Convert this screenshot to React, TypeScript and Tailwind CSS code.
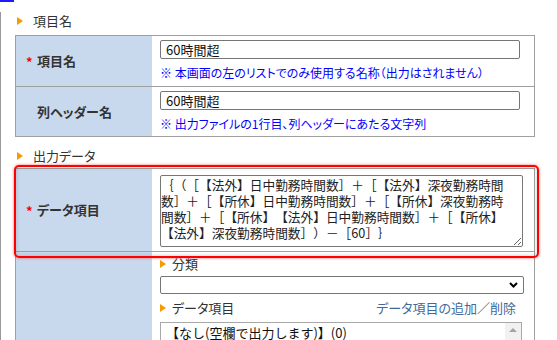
import React from 'react'

const DATA_LINES = [
  '｛（［【法外】日中勤務時間数］＋［【法外】深夜勤務時間',
  '数］＋［【所休】日中勤務時間数］＋［【所休】深夜勤務時',
  '間数］＋［【所休】【法外】日中勤務時間数］＋［【所休】',
  '【法外】深夜勤務時間数］）－［60］｝',
]

function Tri({ gap }: { gap: string }) {
  return (
    <span
      className={`inline-block w-0 h-0 border-y-[4.5px] border-y-transparent border-l-[6px] border-l-[#f59a00] ${gap}`}
    />
  )
}

function Label({ text, required }: { text: string; required?: boolean }) {
  return (
    <div className="w-[136px] flex-shrink-0 bg-[#c9d9ed] flex items-center pl-[10px]">
      <span className="w-[11px] text-[13px] leading-none font-bold text-[#ff0000]">{required ? '*' : ''}</span>
      <span className="text-[13px] font-bold text-[#333]">{text}</span>
    </div>
  )
}

function TextRow({ value, note, first }: { value: string; note: string; first?: boolean }) {
  return (
    <div className={`flex h-[50px] ${first ? '' : 'border-t border-[#a0a0a0]'}`}>
      <Label text={first ? '項目名' : '列ヘッダー名'} required={first} />
      <div className="flex-1 pl-[8px] pt-[4px]">
        <div className="w-[360px] h-[19px] border border-[#767676] rounded-[2px] px-[5px] text-[13px] leading-[17px] text-[#111]">
          {value}
        </div>
        <div className="mt-[6px] text-[12px] leading-[16px] text-[#0000ff] whitespace-nowrap">{note}</div>
      </div>
    </div>
  )
}

export default function App() {
  return (
    <div className="relative w-[557px] h-[340px] overflow-hidden bg-white font-['Noto_Sans_CJK_JP','Noto_Sans',sans-serif] [font-feature-settings:'palt']">
      <div className="w-[14px] h-[2px] bg-[#1b1bff]" />

      <div className="mt-[10px] border-l border-[#9a9a9a] pl-[14px] h-[330px]">
        {/* 項目名 */}
        <div className="h-[17px] flex items-center pl-[2px] mb-[6px]">
          <Tri gap="mr-[10px]" />
          <span className="text-[13px] text-[#333]">項目名</span>
        </div>
        <div className="w-[520px] border border-[#a0a0a0]">
          <TextRow first value="60時間超" note="※ 本画面の左のリストでのみ使用する名称（出力はされません）" />
          <TextRow value="60時間超" note="※ 出力ファイルの1行目、列ヘッダーにあたる文字列" />
        </div>

        {/* 出力データ */}
        <div className="h-[17px] flex items-center pl-[2px] mt-[10px] mb-[4px]">
          <Tri gap="mr-[10px]" />
          <span className="text-[13px] text-[#333]">出力データ</span>
        </div>
        <div className="w-[520px] border-x border-t border-[#a0a0a0]">
          <div className="flex h-[82px]">
            <Label text="データ項目" required />
            <div className="flex-1 pl-[8px] pt-[6px]">
              <textarea
                readOnly
                wrap="off"
                value={DATA_LINES.join('\n')}
                className="block w-[363px] h-[72px] border border-[#777] rounded-[2px] pt-[1px] pl-0 pr-[4px] text-[12.7px] leading-[16px] text-[#222] overflow-hidden resize [font-feature-settings:normal] [text-spacing-trim:space-all] outline-none"
              />
            </div>
          </div>
          <div className="flex h-[120px] border-t border-[#a0a0a0]">
            <div className="w-[136px] flex-shrink-0 bg-[#c9d9ed]" />
            <div className="flex-1 pl-[8px] pt-[4px] pr-[11px]">
              <div className="h-[16px] flex items-center">
                <Tri gap="mr-[6px]" />
                <span className="text-[13px] text-[#333]">分類</span>
              </div>
              <div className="mt-[4px] w-[364px] h-[18px] border border-[#767676] rounded-[2px] flex items-center justify-end pr-[5px]">
                <svg width="9" height="6" viewBox="0 0 9 6">
                  <path d="M1 1l3.5 3.5L8 1" fill="none" stroke="#000" strokeWidth="2" />
                </svg>
              </div>
              <div className="mt-[6px] h-[16px] flex items-center w-[362px]">
                <Tri gap="mr-[6px]" />
                <span className="text-[13px] text-[#333]">データ項目</span>
                <span className="ml-auto pr-[6px] text-[13px] text-[#3f6a9a]">データ項目の追加／削除</span>
              </div>
              <div className="mt-[6px] w-[362px] h-[40px] border border-[#a9a9a9] flex">
                <div className="flex-1 pl-[5px] pt-[2px] text-[13px] leading-[16px] text-[#111] [font-feature-settings:normal] [text-spacing-trim:space-all]">
                  【なし(空欄で出力します)】(0)
                </div>
                <div className="w-[16px] bg-[#f1f1f1] flex justify-center pt-[5px]">
                  <span className="w-0 h-0 border-x-[4px] border-x-transparent border-b-[4px] border-b-[#a3a3a3]" />
                </div>
              </div>
            </div>
          </div>
        </div>
      </div>

      {/* red highlight around データ項目 */}
      <div className="absolute left-[14px] top-[165px] w-[525px] h-[93px] rounded-[5px] border-2 border-[#ff0000] shadow-[0_0_3px_rgba(255,0,0,0.6),inset_0_0_4px_rgba(0,0,0,0.2)] pointer-events-none" />
    </div>
  )
}
